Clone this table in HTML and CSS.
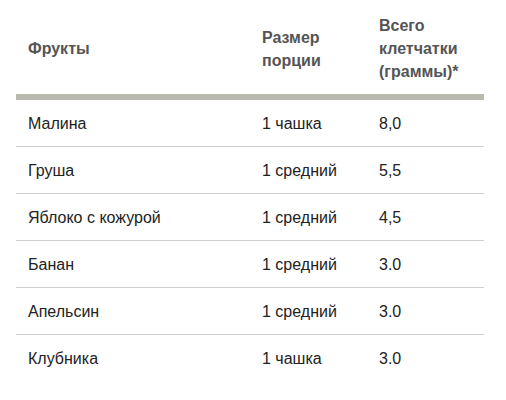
FILE: index.html
```html
<!DOCTYPE html>
<html lang="ru">
<head>
<meta charset="utf-8">
<link rel="stylesheet" href="styles.css">
</head>
<body>
<table class="fiber">
  <colgroup>
    <col class="c1"><col class="c2"><col class="c3">
  </colgroup>
  <thead>
    <tr>
      <th>Фрукты</th>
      <th>Размер порции</th>
      <th>Всего клетчатки (граммы)*</th>
    </tr>
  </thead>
  <tbody>
    <tr><td>Малина</td><td>1 чашка</td><td>8,0</td></tr>
    <tr><td>Груша</td><td>1 средний</td><td>5,5</td></tr>
    <tr><td>Яблоко с кожурой</td><td>1 средний</td><td>4,5</td></tr>
    <tr><td>Банан</td><td>1 средний</td><td>3.0</td></tr>
    <tr><td>Апельсин</td><td>1 средний</td><td>3.0</td></tr>
    <tr><td>Клубника</td><td>1 чашка</td><td>3.0</td></tr>
  </tbody>
</table>
</body>
</html>
```
FILE: styles.css
```css
html, body {
  margin: 0;
  padding: 0;
  background: #ffffff;
}
body {
  padding: 0 16px;
  font-family: "Liberation Sans", Arial, Helvetica, sans-serif;
}
.fiber {
  width: 468px;
  border-collapse: collapse;
  table-layout: fixed;
}
.c1 { width: 234px; }
.c2 { width: 117px; }
.c3 { width: 117px; }
.fiber th {
  text-align: left;
  vertical-align: middle;
  font-weight: bold;
  font-size: 16px;
  line-height: 23px;
  color: #555555;
  padding: 14px 12px 11px;
  border-bottom: 6px solid #babaae;
}
.fiber td {
  font-size: 16px;
  line-height: 20px;
  color: #222222;
  padding: 14px 12px 12px;
  border-bottom: 1px solid #d0d0d0;
}
.fiber tbody tr:last-child td {
  border-bottom: none;
}
```
